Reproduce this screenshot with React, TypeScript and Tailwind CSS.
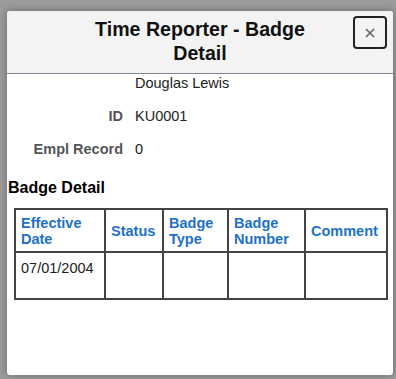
const font = { fontFamily: '"Liberation Sans", Arial, sans-serif' };

const columns = [
  { label: 'Effective Date', width: 'w-[90px]' },
  { label: 'Status', width: 'w-[58px]' },
  { label: 'Badge Type', width: 'w-[65px]' },
  { label: 'Badge Number', width: 'w-[77px]' },
  { label: 'Comment', width: 'w-[82px]' },
];

const fields = [
  { label: '', value: 'Douglas Lewis' },
  { label: 'ID', value: 'KU0001' },
  { label: 'Empl Record', value: '0' },
];

const App = () => {
  return (
    <div className="w-[396px] h-[379px] bg-[#9c9c9c] pt-[11px] pl-[7px] overflow-hidden" style={font}>
      <div className="w-[386px] h-[364px] bg-white rounded-[3px] shadow-[0_0_8px_rgba(0,0,0,0.35)] overflow-hidden">
        <header className="relative bg-[#f3f3f3] border-b border-[#7c8894] pt-[6px] pb-[8px]">
          <h1 className="w-[250px] mx-auto text-center text-[19.6px] leading-[24px] font-bold text-[#111]">
            Time Reporter - Badge Detail
          </h1>
          <button className="absolute right-[6px] top-[5px] w-[34px] h-[33px] rounded-[4px] border-2 border-[#222] flex items-center justify-center bg-[#f3f3f3]">
            <svg width="10" height="10" viewBox="0 0 10 10">
              <path d="M1 1L9 9M9 1L1 9" stroke="#666" strokeWidth="1.7" />
            </svg>
          </button>
        </header>

        <div className="pt-[1px]">
          {fields.map((f) => (
            <div key={f.value} className="flex h-[33px] text-[14.5px] leading-[16px]">
              <div className="w-[116px] text-right font-bold text-[#555]">{f.label}</div>
              <div className="ml-[12px] text-[#222]">{f.value}</div>
            </div>
          ))}
        </div>

        <h2 className="pl-[1px] mt-[5px] text-[16px] leading-[18px] font-bold text-black">Badge Detail</h2>

        <table className="ml-[7px] mt-[11px] border-collapse table-fixed text-[14.5px] leading-[16px]">
          <thead>
            <tr>
              {columns.map((c) => (
                <th
                  key={c.label}
                  className={`${c.width} h-[43px] border-2 border-[#444] px-[5px] text-left align-middle font-bold text-[#2070cc]`}
                >
                  {c.label}
                </th>
              ))}
            </tr>
          </thead>
          <tbody>
            <tr>
              <td className="h-[47px] border-2 border-[#444] px-[5px] pt-[7px] align-top text-[#222]">07/01/2004</td>
              <td className="border-2 border-[#444]"></td>
              <td className="border-2 border-[#444]"></td>
              <td className="border-2 border-[#444]"></td>
              <td className="border-2 border-[#444]"></td>
            </tr>
          </tbody>
        </table>
      </div>
    </div>
  );
};

export default App;
